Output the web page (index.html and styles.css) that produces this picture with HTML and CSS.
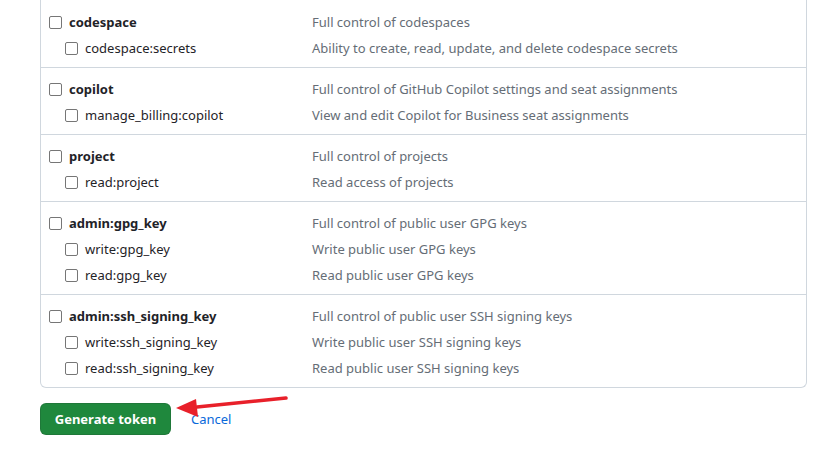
FILE: index.html
```html
<!DOCTYPE html>
<html>
<head>
<meta charset="utf-8">
<link rel="stylesheet" href="styles.css">
</head>
<body>
<div class="page">
  <div class="scopes">
    <div class="group">
      <div class="row"><label class="name top"><span class="cb"></span>codespace</label><span class="desc">Full control of codespaces</span></div>
      <div class="row"><label class="name sub"><span class="cb"></span>codespace:secrets</label><span class="desc">Ability to create, read, update, and delete codespace secrets</span></div>
    </div>
    <div class="group">
      <div class="row"><label class="name top"><span class="cb"></span>copilot</label><span class="desc">Full control of GitHub Copilot settings and seat assignments</span></div>
      <div class="row"><label class="name sub"><span class="cb"></span>manage_billing:copilot</label><span class="desc">View and edit Copilot for Business seat assignments</span></div>
    </div>
    <div class="group">
      <div class="row"><label class="name top"><span class="cb"></span>project</label><span class="desc">Full control of projects</span></div>
      <div class="row"><label class="name sub"><span class="cb"></span>read:project</label><span class="desc">Read access of projects</span></div>
    </div>
    <div class="group">
      <div class="row"><label class="name top"><span class="cb"></span>admin:gpg_key</label><span class="desc">Full control of public user GPG keys</span></div>
      <div class="row"><label class="name sub"><span class="cb"></span>write:gpg_key</label><span class="desc">Write public user GPG keys</span></div>
      <div class="row"><label class="name sub"><span class="cb"></span>read:gpg_key</label><span class="desc">Read public user GPG keys</span></div>
    </div>
    <div class="group">
      <div class="row"><label class="name top"><span class="cb"></span>admin:ssh_signing_key</label><span class="desc">Full control of public user SSH signing keys</span></div>
      <div class="row"><label class="name sub"><span class="cb"></span>write:ssh_signing_key</label><span class="desc">Write public user SSH signing keys</span></div>
      <div class="row"><label class="name sub"><span class="cb"></span>read:ssh_signing_key</label><span class="desc">Read public user SSH signing keys</span></div>
    </div>
  </div>
  <div class="actions">
    <button class="btn">Generate token</button>
    <a class="cancel" href="#">Cancel</a>
    <svg class="arrow" width="130" height="34" viewBox="0 0 130 34">
      <line x1="115" y1="3" x2="26" y2="12" stroke="#e8202a" stroke-width="3.5" stroke-linecap="round"/>
      <polygon points="5,13 25,4 27,22" fill="#e8202a"/>
    </svg>
  </div>
</div>
</body>
</html>
```
FILE: styles.css
```css
* { box-sizing: border-box; }
html, body { margin: 0; padding: 0; background: #fff; }
body {
  font-family: "Noto Sans", "Open Sans", "Liberation Sans", sans-serif;
  font-size: 13px;
  color: #1f2328;
}
.page { padding: 0 15px 0 40px; }
.scopes {
  border: 1px solid #d0d7de;
  border-top: none;
  border-radius: 0 0 6px 6px;
}
.group {
  padding: 8px 0 6px;
  border-top: 1px solid #d0d7de;
}
.group:first-child { border-top: none; padding-top: 9px; }
.row {
  display: flex;
  align-items: center;
  height: 26px;
}
.name {
  display: flex;
  align-items: center;
  width: 271px;
  flex: none;
}
.name.top { padding-left: 8px; font-weight: 700; }
.name.sub { padding-left: 24px; }
.cb {
  width: 13px;
  height: 13px;
  border: 1px solid #767676;
  border-radius: 2px;
  margin-right: 7px;
  flex: none;
  background: #fff;
}
.desc { color: #656d76; }
.actions {
  display: flex;
  align-items: center;
  margin-top: 15px;
  position: relative;
}
.btn {
  font-family: inherit;
  font-size: 13px;
  font-weight: 700;
  color: #fff;
  background: #1f883d;
  border: 1px solid rgba(31,35,40,0.15);
  border-radius: 6px;
  height: 32px;
  width: 131px;
  padding: 0;
}
.cancel {
  color: #0969da;
  text-decoration: none;
  margin-left: 20px;
  font-size: 13px;
}
.arrow {
  position: absolute;
  left: 131px;
  top: -8px;
}
```
